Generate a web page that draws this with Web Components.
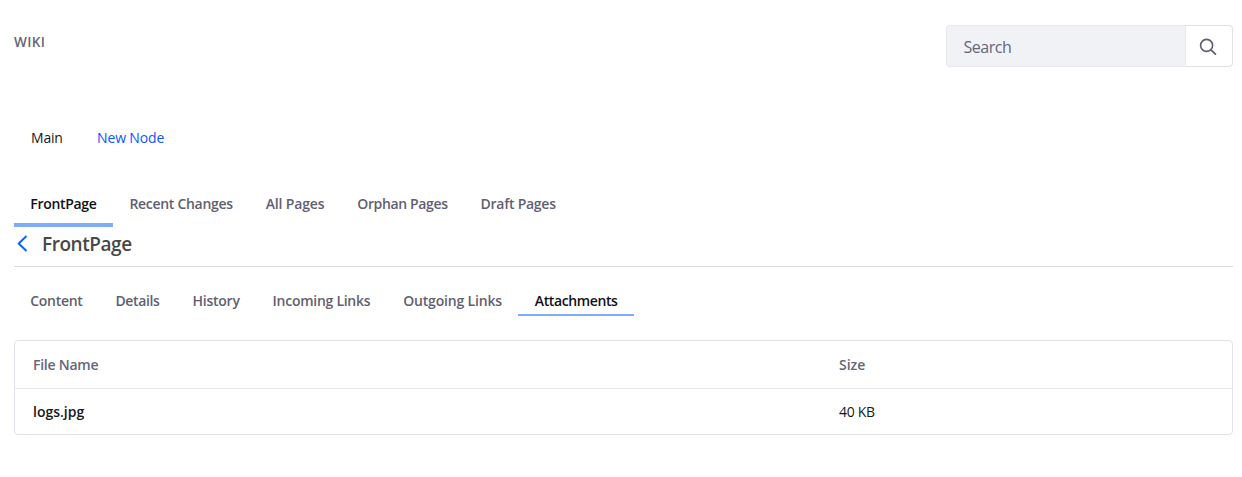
<!DOCTYPE html>
<html lang="en">
<head>
<meta charset="utf-8">
<title>Wiki</title>
<style>
  body { margin: 0; background: #fff; font: 14px/20px "Open Sans", "Noto Sans", sans-serif; color: #17171d; }
</style>
</head>
<body>
<wiki-page></wiki-page>
<script>
const define = (name, html, setup) => {
  const tpl = document.createElement('template');
  tpl.innerHTML = html;
  customElements.define(name, class extends HTMLElement {
    connectedCallback() {
      if (this.shadowRoot) return;
      this.attachShadow({ mode: 'open' }).append(tpl.content.cloneNode(true));
      if (setup) setup(this);
    }
  });
};

// Label whose tracking is adjusted so that its text takes up the given width.
define('fit-label', `
  <style>:host{display:block;white-space:nowrap;flex:none} span{display:inline-block}</style>
  <span><slot></slot></span>`, el => {
  const span = el.shadowRoot.querySelector('span');
  const width = parseFloat(el.getAttribute('w'));
  const count = el.textContent.length;
  el.style.width = width + 'px';
  const natural = span.getBoundingClientRect().width;
  span.style.letterSpacing = ((width - 0.3 - natural) / count).toFixed(3) + 'px';
});

define('wiki-search', `
  <style>
    :host{display:flex;box-sizing:border-box;width:287px;height:42px;font-size:16px}
    .field{box-sizing:border-box;width:239px;display:flex;align-items:center;padding:1px 0 0 16.5px;background:#f1f2f5;border:1px solid #e7e7ed;border-right:0;border-radius:4px 0 0 4px;color:#65667a}
    button{box-sizing:border-box;flex:1;display:flex;align-items:center;justify-content:center;margin:0;padding:1px 2px 0 0;background:#fff;border:1px solid #e0e1e8;border-left-color:#e7e7ed;border-radius:0 4px 4px 0}
    svg{display:block}
  </style>
  <div class="field"><fit-label w="48">Search</fit-label></div>
  <button aria-label="Search"><svg width="18" height="18" viewBox="0 0 18 18" fill="none" stroke="#5c5d70" stroke-width="1.6"><circle cx="7.6" cy="7.4" r="6"/><path d="M12 11.9l4.9 4.7" stroke-width="1.8"/></svg></button>`);

define('wiki-tab', `
  <style>
    :host{display:flex;box-sizing:border-box;padding:var(--drop,0) 16.3px 0;color:#5f6072;font-weight:600;border-bottom:var(--bar,2px) solid transparent;height:100%}
    :host([active]){color:#111116;border-bottom-color:#80acff}
  </style><slot></slot>`);

define('wiki-tabs', `
  <style>:host{display:flex}</style><slot></slot>`);

define('wiki-heading', `
  <style>
    :host{display:flex;box-sizing:border-box;height:40px;border-bottom:1px solid #d9d9d9;padding-left:2px;color:#484848;font-size:19px;font-weight:600;line-height:26px}
    svg{display:block;margin:8px 13px 0 1px;flex:none}
    div{padding-top:4px}
  </style>
  <svg width="12" height="17" viewBox="0 0 12 17" fill="none" stroke="#0b5fff" stroke-width="1.9"><path d="M9.5 1L1.7 8.5l7.8 7.5"/></svg>
  <div><slot></slot></div>`);

define('wiki-table', `
  <style>
    :host{display:block;box-sizing:border-box;height:95px;border:1px solid #e2e3ea;border-radius:4px}
    .row{display:grid;grid-template-columns:806px 1fr;box-sizing:border-box;align-items:center;padding-left:18px;height:45px;padding-top:1px}
    .head{height:48px;border-bottom:1px solid #e7e7ed;color:#65667a;font-weight:600;padding-top:1px}
    b{font-weight:600;color:#17171d}
  </style>
  <div class="row head"><fit-label w="65.5">File Name</fit-label><fit-label w="26.5">Size</fit-label></div>
  <div class="row"><b><fit-label w="51.5">logs.jpg</fit-label></b><fit-label w="36">40 KB</fit-label></div>`);

define('wiki-page', `
  <style>
    :host{display:flex;flex-direction:column;box-sizing:border-box;height:477px;padding:25px 9px 0 14px;overflow:hidden}
    header{display:flex;justify-content:space-between;height:103px}
    h1{margin:7px 0 0;font-size:13.6px;line-height:20px;font-weight:600;color:#65667a}
    nav{display:flex;gap:34px;padding-left:17px;height:65px}
    .link{color:#0b57ff}
    .primary{--bar:4px;--drop:1px;height:34px}
    .secondary{--bar:2px;height:25px;margin-top:24px}
    wiki-table{margin-top:24px}
  </style>
  <header><h1><fit-label w="31.5">WIKI</fit-label></h1><wiki-search></wiki-search></header>
  <nav><fit-label w="32">Main</fit-label><fit-label class="link" w="67.5">New Node</fit-label></nav>
  <wiki-tabs class="primary">
    <wiki-tab active><fit-label w="66.5">FrontPage</fit-label></wiki-tab>
    <wiki-tab><fit-label w="103.7">Recent Changes</fit-label></wiki-tab>
    <wiki-tab><fit-label w="59">All Pages</fit-label></wiki-tab>
    <wiki-tab><fit-label w="90.7">Orphan Pages</fit-label></wiki-tab>
    <wiki-tab><fit-label w="75.5">Draft Pages</fit-label></wiki-tab>
  </wiki-tabs>
  <wiki-heading><fit-label w="90">FrontPage</fit-label></wiki-heading>
  <wiki-tabs class="secondary">
    <wiki-tab><fit-label w="52.5">Content</fit-label></wiki-tab>
    <wiki-tab><fit-label w="44.5">Details</fit-label></wiki-tab>
    <wiki-tab><fit-label w="47.5">History</fit-label></wiki-tab>
    <wiki-tab><fit-label w="98">Incoming Links</fit-label></wiki-tab>
    <wiki-tab><fit-label w="99">Outgoing Links</fit-label></wiki-tab>
    <wiki-tab active><fit-label w="83">Attachments</fit-label></wiki-tab>
  </wiki-tabs>
  <wiki-table></wiki-table>`);
</script>
</body>
</html>
